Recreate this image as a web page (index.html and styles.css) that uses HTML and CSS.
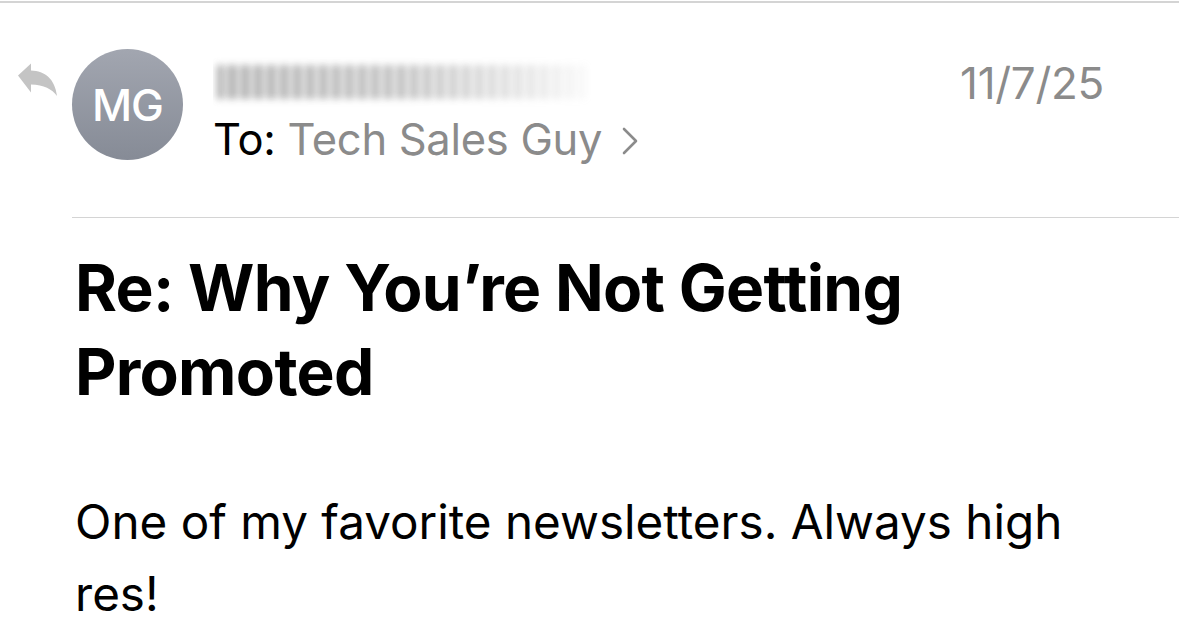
FILE: index.html
```html
<!DOCTYPE html>
<html>
<head>
<meta charset="utf-8">
<link rel="stylesheet" href="styles.css">
</head>
<body>
<div class="topline"></div>
<header class="header">
  <svg class="reply" viewBox="0 0 40 34" width="40" height="34">
    <path d="M0 12.5 L13 0.5 L13 7.5 C27 8 37 16 39 33 C34 26 26 22 13 21.5 L13 29.5 Z" fill="#c4c4c4"/>
  </svg>
  <div class="avatar">MG</div>
  <div class="info">
    <div class="blurname"><div class="stripes"></div></div>
    <div class="to"><span class="to-label">To:</span> <span class="to-name">Tech Sales Guy</span><svg class="chev" viewBox="0 0 16 28" width="16" height="28"><path d="M2 2 L14 14 L2 26" fill="none" stroke="#8b8b8b" stroke-width="2.6" stroke-linecap="round" stroke-linejoin="round"/></svg></div>
  </div>
  <div class="date">11/7/25</div>
</header>
<div class="sep"></div>
<h1 class="subject">Re: Why You’re Not Getting Promoted</h1>
<p class="body">One of my favorite newsletters. Always high res!</p>
</body>
</html>
```
FILE: styles.css
```css
html, body {
  margin: 0;
  padding: 0;
  background: #fff;
  width: 1179px;
  height: 641px;
  overflow: hidden;
  font-family: Inter, "Noto Sans", sans-serif;
}
.topline {
  height: 2px;
  margin-top: 1px;
  background: #d4d4d4;
}
.header {
  display: flex;
  align-items: flex-start;
  padding-top: 46px;
  height: 168px;
  box-sizing: border-box;
}
.reply {
  margin-left: 18px;
  margin-top: 14px;
  flex: none;
}
.avatar {
  flex: none;
  margin-left: 14px;
  width: 111px;
  height: 111px;
  border-radius: 50%;
  background: linear-gradient(#a2a6b0, #868b96);
  color: #fff;
  font-size: 44px;
  font-weight: 500;
  display: flex;
  align-items: center;
  justify-content: center;
  letter-spacing: -1px;
}
.info {
  margin-left: 30px;
  flex: 1;
  display: flex;
  flex-direction: column;
}
.blurname {
  width: 378px;
  height: 56px;
  margin-top: 6px;
  overflow: hidden;
  -webkit-mask-image: linear-gradient(to right, #000 0%, rgba(0,0,0,0.8) 50%, rgba(0,0,0,0.3) 85%, rgba(0,0,0,0.05) 100%);
  mask-image: linear-gradient(to right, #000 0%, rgba(0,0,0,0.8) 50%, rgba(0,0,0,0.3) 85%, rgba(0,0,0,0.05) 100%);
}
.stripes {
  margin: 10px 4px 0 4px;
  height: 34px;
  background: repeating-linear-gradient(to right, #8e8e8e 0, #8e8e8e 4px, #e4e4e4 8px, #e4e4e4 10px, #8e8e8e 13px);
  filter: blur(3.5px);
  opacity: 0.75;
}
.to {
  margin-top: 2px;
  font-size: 43.5px;
  line-height: 52px;
  color: #000;
  white-space: nowrap;
  letter-spacing: -0.3px;
  display: flex;
  align-items: center;
}
.to-label {
  margin-right: 12px;
}
.to-name {
  color: #8b8b8b;
}
.chev {
  margin-left: 20px;
  margin-top: 4px;
}
.date {
  flex: none;
  margin-top: 10px;
  margin-right: 75px;
  font-size: 44px;
  line-height: 48px;
  color: #8b8b8b;
  letter-spacing: -0.3px;
}
.sep {
  margin-left: 72px;
  margin-top: 46px;
  height: 1px;
  background: #d4d4d4;
}
.subject {
  margin: 28px 0 0 75px;
  width: 920px;
  font-size: 64px;
  line-height: 84px;
  font-weight: 700;
  letter-spacing: -0.7px;
}
.body {
  margin: 72px 0 0 75px;
  width: 1070px;
  font-size: 47.6px;
  line-height: 72px;
}
```
